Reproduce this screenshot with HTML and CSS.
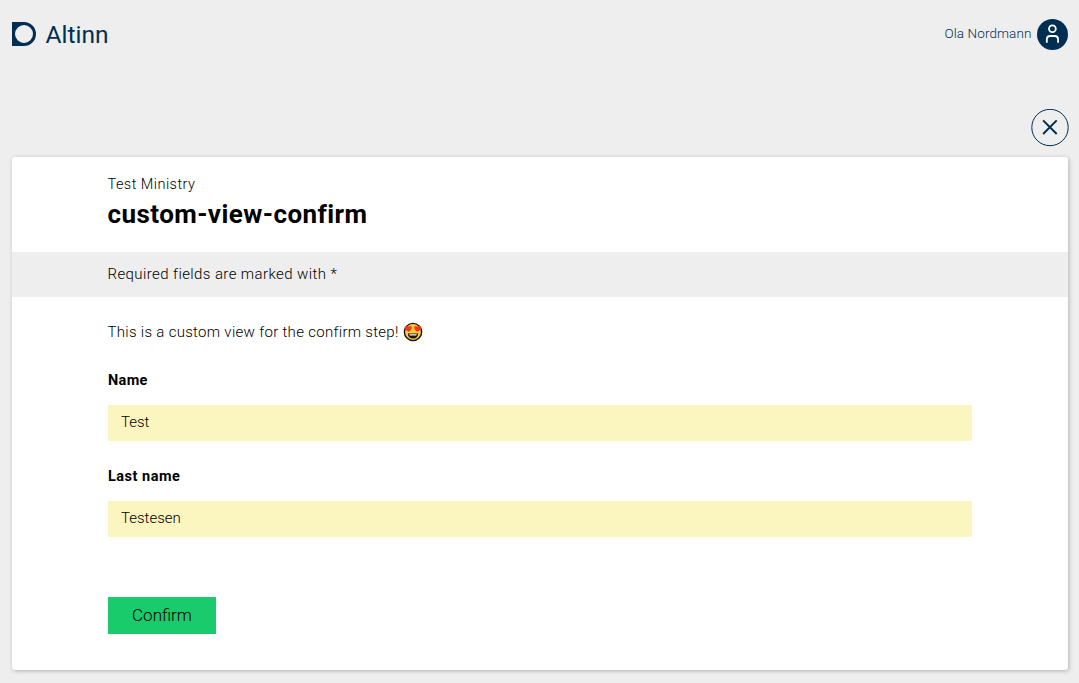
FILE: index.html
```html
<!DOCTYPE html>
<html lang="en">
<head>
<meta charset="utf-8">
<title>custom-view-confirm</title>
<link rel="stylesheet" href="styles.css">
</head>
<body>
<header class="topbar">
  <div class="brand">
    <svg class="brand-mark" viewBox="0 0 24 24" aria-hidden="true"><path fill="#022f51" fill-rule="evenodd" d="M0 0H12A12 12 0 0 1 12 24H0ZM12 3A9 9 0 1 0 12 21A9 9 0 1 0 12 3Z"/></svg>
    <span class="brand-name">Altinn</span>
  </div>
  <div class="user">
    <span class="user-name">Ola Nordmann</span>
    <svg class="avatar" viewBox="0 0 31 31" aria-hidden="true"><circle cx="15.5" cy="15.5" r="15.5" fill="#022f51"/><g fill="none" stroke="#fff" stroke-width="1.8"><circle cx="15.4" cy="9.8" r="3.4"/><path d="M9.8 23.7V20.5Q9.8 17 13.3 17H17.6Q21.1 17 21.1 20.5V23.7"/></g></svg>
  </div>
</header>
<div class="close-row">
  <button class="close" aria-label="Close"><svg viewBox="0 0 38 38"><circle cx="19" cy="18.5" r="18.2" fill="none" stroke="#022f51"/><path d="M12.1 11.4L25.7 25M25.7 11.4L12.1 25" stroke="#022f51" stroke-width="2"/></svg></button>
</div>
<main class="card">
  <div class="card-head">
    <p class="owner">Test Ministry</p>
    <h1 class="title">custom-view-confirm</h1>
  </div>
  <div class="notice">Required fields are marked with *</div>
  <div class="content">
    <p class="intro"><span class="intro-text">This is a custom view for the confirm step!</span>
      <svg class="emoji" viewBox="0 0 20 20" role="img" aria-label="Smiling face with heart eyes"><circle cx="10" cy="10" r="8.6" fill="#ffc83d" stroke="#161616" stroke-width="1.4"/><path fill="#f03a17" d="M5.8 10.1L2 7.2Q.8 4.8 2.9 3.9Q4.5 3.2 5.6 4.8Q7.5 3.3 8.6 4.8Q9.6 6.8 5.8 10.1ZM14.2 10.1Q10.4 6.8 11.4 4.8Q12.5 3.3 14.4 4.8Q15.5 3.2 17.1 3.9Q19.2 4.8 18 7.2Z"/><path fill="#161616" d="M4.8 11.4H15.2Q14.7 16.4 10 16.4T4.8 11.4Z"/><path fill="#fff" d="M6.2 12.2H13.8L13.2 13.6H6.8Z"/></svg>
    </p>
    <div class="field"><span class="label">Name</span><div class="value">Test</div></div>
    <div class="field"><span class="label label-last">Last name</span><div class="value">Testesen</div></div>
    <button class="confirm">Confirm</button>
  </div>
</main>
</body>
</html>
```
FILE: styles.css
```css
* { box-sizing: border-box; }
body {
  margin: 0;
  height: 683px;
  overflow: hidden;
  background: #eee;
  color: #000;
  font: 300 15px/24px Roboto, "Liberation Sans", sans-serif;
}
p, h1 { margin: 0; }
button { padding: 0; border: 0; font-family: inherit; }
span { white-space: nowrap; }
.topbar {
  height: 109px;
  padding: 19px 11.5px 0 12px;
  display: flex;
  justify-content: space-between;
  align-items: flex-start;
  color: #022f51;
}
.brand { display: flex; gap: 9.5px; padding-top: 3px; }
.brand-mark { width: 24px; height: 24px; }
.brand-name { font-size: 24.5px; font-weight: 400; line-height: 25px; letter-spacing: 0; }
.user { display: flex; gap: 5px; }
.user-name { font-size: 13.5px; line-height: 29px; letter-spacing: .1px; }
.avatar { width: 31px; height: 31px; }
.close-row { height: 48px; padding-right: 10px; display: flex; justify-content: flex-end; }
.close { width: 38px; height: 38px; background: none; }
.close svg { display: block; width: 38px; height: 38px; }
.card {
  width: 1056px;
  height: 513px;
  margin-left: 12px;
  background: #fff;
  border-radius: 3px;
  box-shadow: 1px 1px 4px rgba(0, 0, 0, .25);
}
.card-head { height: 95px; padding: 16px 96px 0 95.5px; }
.owner { font-size: 14.5px; letter-spacing: .45px; }
.title { margin-top: 1px; font-size: 26px; line-height: 32px; font-weight: 700; letter-spacing: .43px; white-space: nowrap; }
.notice { height: 45px; padding: 10px 96px 0 95.5px; background: #eee; letter-spacing: .4px; }
.content { padding: 23px 96px 0; }
.intro { display: flex; align-items: center; gap: 4px; height: 24px; margin-left: -.5px; }
.intro-text { letter-spacing: .3px; }
.emoji { width: 20px; height: 20px; }
.field { height: 72px; margin-top: 24px; }
.label { display: block; padding-top: 1px; font-size: 14.5px; font-weight: 700; letter-spacing: .35px; }
.label-last { letter-spacing: .5px; }
.value { height: 36px; margin-top: 12px; padding: 5px 13px; background: #fbf5bf; }
.confirm {
  display: block;
  width: 108px;
  height: 37px;
  margin-top: 61px;
  background: #1acb6c;
  color: #000;
  font-size: 17px;
  font-weight: 300;
  line-height: 37px;
}
```
